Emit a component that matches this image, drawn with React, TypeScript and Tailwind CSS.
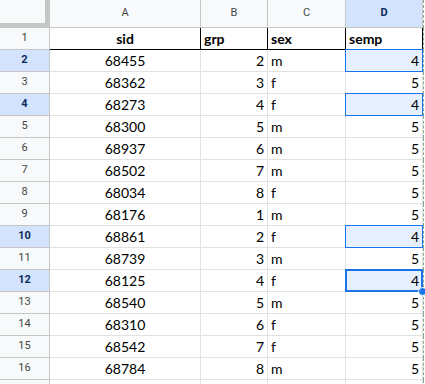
import React from "react";

const data: [number, number, string, number][] = [
  [68455, 2, "m", 4],
  [68362, 3, "f", 5],
  [68273, 4, "f", 4],
  [68300, 5, "m", 5],
  [68937, 6, "m", 5],
  [68502, 7, "m", 5],
  [68034, 8, "f", 5],
  [68176, 1, "m", 5],
  [68861, 2, "f", 4],
  [68739, 3, "m", 5],
  [68125, 4, "f", 4],
  [68540, 5, "m", 5],
  [68310, 6, "f", 5],
  [68542, 7, "f", 5],
  [68784, 8, "m", 5],
];

const selected = new Set([2, 4, 10, 12]);
const active = 12;

const gridCols = "grid grid-cols-[50px_151px_67px_78px_77px_2px]";

function RowHeader({ n }: { n?: number }) {
  const sel = n !== undefined && selected.has(n);
  return (
    <div
      className={
        "flex items-center justify-center border-r border-b border-[#c4c7c5] text-[11px] font-['Roboto',sans-serif] " +
        (sel ? "bg-[#d3e3fd] text-[#0b2a5c] font-bold" : "bg-[#f8f9fa] text-[#444746]")
      }
    >
      {n}
    </div>
  );
}

function Cell({
  children,
  align,
  extra = "",
}: {
  children?: React.ReactNode;
  align: "left" | "right" | "center";
  extra?: string;
}) {
  const a = align === "left" ? "justify-start pl-[3px]" : align === "right" ? "justify-end pr-[3px]" : "justify-center";
  return (
    <div className={"relative flex items-center border-r border-b border-[#e1e3e1] bg-white text-[14px] text-black font-['Lato',sans-serif] " + a + " " + extra}>
      {children}
    </div>
  );
}

function Dashed() {
  return <div className="border-l border-dashed border-[#8aa89a] bg-white" />;
}

export default function App() {
  return (
    <div className="w-[425px] h-[384px] overflow-hidden bg-white">
      {/* Column headers */}
      <div className={gridCols + " h-[28px]"}>
        <div className="bg-[#f8f9fa] border-r border-b border-[#c4c7c5]">
          <div className="h-full w-full border-r-[4px] border-b-[4px] border-[#c4c7c5]" />
        </div>
        {["A", "B", "C"].map((c) => (
          <div key={c} className="flex items-center justify-center bg-[#f8f9fa] border-r border-b border-[#c4c7c5] text-[11px] text-[#444746] font-['Roboto',sans-serif]">
            {c}
          </div>
        ))}
        <div className="flex items-center justify-center bg-[#d3e3fd] border-r border-b border-[#c4c7c5] text-[11px] text-[#0b2a5c] font-bold font-['Roboto',sans-serif]">
          D
        </div>
        <Dashed />
      </div>

      {/* Row 1 */}
      <div className={gridCols + " h-[22px]"}>
        <RowHeader n={1} />
        <Cell align="center" extra="font-bold !border-r-black !border-b-black">sid</Cell>
        <Cell align="left" extra="font-bold !border-r-black !border-b-black">grp</Cell>
        <Cell align="left" extra="font-bold !border-r-black !border-b-black">sex</Cell>
        <Cell align="left" extra="font-bold !border-r-black !border-b-black">semp</Cell>
        <Dashed />
      </div>

      {data.map((r, i) => {
        const n = i + 2;
        const sel = selected.has(n);
        const act = n === active;
        return (
          <div key={n} className={gridCols + " h-[22px]"}>
            <RowHeader n={n} />
            <Cell align="center">{r[0]}</Cell>
            <Cell align="right">{r[1]}</Cell>
            <Cell align="left">{r[2]}</Cell>
            <Cell align="right">
              {sel && (
                <div
                  className={
                    "absolute -left-px -top-px w-[78px] h-[23px] bg-[#0e65eb]/10 border-[#1a73e8] " +
                    (act ? "border-2" : "border")
                  }
                />
              )}
              <span className="relative">{r[3]}</span>
              {act && (
                <div className="absolute -right-[5px] -bottom-[5px] w-[9px] h-[9px] rounded-full bg-[#1a73e8] border border-white z-10" />
              )}
            </Cell>
            <Dashed />
          </div>
        );
      })}

      {/* Row 17 (partial, clipped) */}
      <div className={gridCols + " h-[22px]"}>
        <RowHeader />
        <Cell align="center" />
        <Cell align="right" />
        <Cell align="left" />
        <Cell align="right" />
        <Dashed />
      </div>
    </div>
  );
}
